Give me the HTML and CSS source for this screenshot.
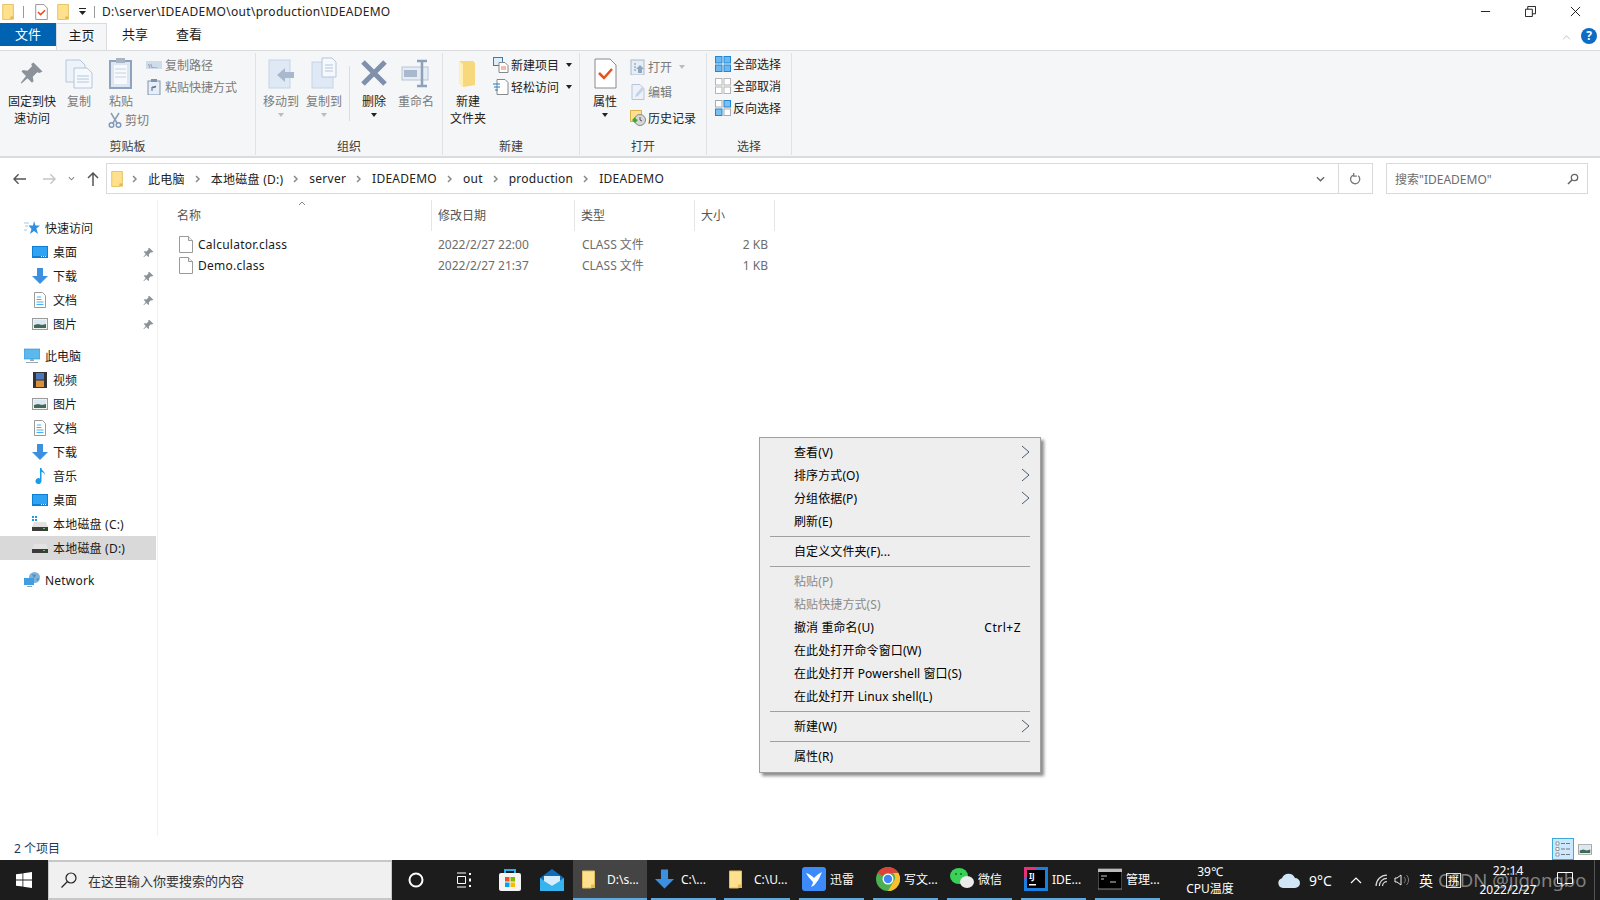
FILE: index.html
```html
<!DOCTYPE html>
<html lang="zh-CN">
<head>
  <meta charset="UTF-8" />
  <title>IDEADEMO</title>
  <link rel="stylesheet" href="styles.css">
</head>
<body>
  <!-- shared icons -->
  <svg class="defs" width="0" height="0">
    <symbol id="folder" viewBox="0 0 14 18">
      <path d="M.5.5h12v14h-3v3H.5z" fill="#ffe08c" stroke="#e3bc5c"/>
      <path d="M9.500 17.500v-3h3.500v3z" fill="#e8b84a"/>
    </symbol>
    <symbol id="checkdoc" viewBox="0 0 14 18">
      <path d="M.5.5h9l4 4v13H.5z" fill="#fff" stroke="#8a8a8a"/>
      <path d="M3 9l3 3 5-5" fill="none" stroke="#e8501e" stroke-width="1.800"/>
    </symbol>
    <symbol id="pin" viewBox="0 0 16 16">
      <path d="M9 1l6 6-2 1-1.500-.5-3 3 .5 3-1 1-3-3L1 15l-.500-.5L4 10 1 7l1-1 3 .5 3-3L7.500 2z" fill="#8b929a"/>
    </symbol>
    <symbol id="desktop" viewBox="0 0 16 12">
      <rect width="16" height="12" fill="#0f7fd6"/>
      <rect x="1" y="1" width="14" height="9" fill="#2ea3f2"/>
      <path d="M9 10h1v1H9zm2 0h1v1h-1zm2 0h1v1h-1z" fill="#fff"/>
    </symbol>
    <symbol id="down" viewBox="0 0 16 16">
      <path d="M5 0h6v8h5l-8 8-8-8h5z" fill="#3d8fdf"/>
    </symbol>
    <symbol id="textdoc" viewBox="0 0 12 16">
      <path d="M.5.500h8l3 3v12H.5z" fill="#fff" stroke="#9a9a9a"/>
      <path d="M3 5h4M2.500 7.500h5M2.500 10h7M2.500 12.500h7" stroke="#4ab0f0"/>
    </symbol>
    <symbol id="picture" viewBox="0 0 16 12">
      <rect x=".5" y=".5" width="15" height="11" fill="#f2f2f2" stroke="#9a9a9a"/>
      <rect x="2" y="2" width="12" height="8" fill="#dbe8f2"/>
      <path d="M2 7l4-1 4 1 4-1v4H2z" fill="#3f6a55"/>
    </symbol>
    <symbol id="drive" viewBox="0 0 16 12">
      <path d="M2 2h12l2 5H0z" fill="#e2e2e2"/>
      <rect y="7" width="16" height="4" fill="#3c3c3c"/>
      <rect x="11" y="8" width="2" height="1" fill="#4fd04f"/>
    </symbol>
    <symbol id="chev" viewBox="0 0 6 8">
      <path d="M1 1l3 3-3 3" fill="none" stroke="#8a8a8a" stroke-width="1.500"/>
    </symbol>
    <symbol id="menuarrow" viewBox="0 0 9 14">
      <path d="M1 1l7 6-7 6" fill="none" stroke="#4a5a6a"/>
    </symbol>
    <symbol id="blankfile" viewBox="0 0 14 17">
      <path d="M.5.500h9l4 4v12H.5z" fill="#fff" stroke="#9a9a9a"/>
      <path d="M9.500.500v4h4" fill="#eee" stroke="#9a9a9a"/>
    </symbol>
    <symbol id="tick4" viewBox="0 0 16 16">
      <rect x=".5" y=".5" width="6.500" height="6.500"/>
      <rect x="9" y=".5" width="6.500" height="6.500"/>
      <rect x=".5" y="9" width="6.500" height="6.500"/>
      <rect x="9" y="9" width="6.500" height="6.500"/>
    </symbol>
  </svg>

  <div class="window">
    <!-- title bar -->
    <div class="titlebar">
      <svg class="tb-ico tb-first"><use href="#folder"/></svg>
      <span class="tb-sep"></span>
      <svg class="tb-ico tb-doc"><use href="#checkdoc"/></svg>
      <svg class="tb-ico tb-folder"><use href="#folder"/></svg>
      <svg class="tb-drop" viewBox="0 0 7 7"><path d="M0 0h7v1H0zM0 3h7L3.500 7z" fill="#222"/></svg>
      <span class="tb-sep tb-sep2"></span>
      <span class="tb-title">D:\server\IDEADEMO\out\production\IDEADEMO</span>
      <div class="winbtns">
        <svg viewBox="0 0 12 12"><path d="M1 6h10" stroke="#111"/></svg>
        <svg viewBox="0 0 12 12"><path d="M.5 3.500h7.500v8H.5zM3 3.500V.5h8.500v8H8" fill="none" stroke="#111"/></svg>
        <svg viewBox="0 0 12 12"><path d="M1 1l10 10M11 1L1 11" stroke="#111"/></svg>
      </div>
    </div>

    <!-- tabs -->
    <div class="tabs">
      <div class="tab tab-file">文件</div>
      <div class="tab tab-on">主页</div>
      <div class="tab tab-share">共享</div>
      <div class="tab tab-view">查看</div>
      <svg class="tab-up" viewBox="0 0 10 6"><path d="M1 5l4-4 4 4" fill="none" stroke="#b5b5b5"/></svg>
      <div class="help">?</div>
    </div>

    <!-- ribbon -->
    <div class="ribbon">
      <div class="group g-clip">
        <div class="group-body">
          <div class="big w-pin">
            <svg class="big-ico" viewBox="0 0 32 32"><use href="#pin" x="4" y="4" width="24" height="24"/></svg>
            <span>固定到快<br>速访问</span>
          </div>
          <div class="big w-copy off">
            <svg class="big-ico" viewBox="0 0 32 32"><path d="M3 3h14l5 5v17H3z" fill="#eef3fa" stroke="#b6c6dc"/><path d="M11 11h13l5 5v15H11z" fill="#f5f8fc" stroke="#b6c6dc"/><path d="M14 19h12M14 22h12M14 25h12" stroke="#b6c6dc"/></svg>
            <span>复制</span>
          </div>
          <div class="paste-col">
            <div class="big off">
              <svg class="big-ico" viewBox="0 0 32 32"><rect x="5" y="4" width="21" height="27" fill="#dde6f2" stroke="#8fa3bd" stroke-width="2"/><rect x="9" y="8" width="13" height="19" fill="#f7f9fc"/><rect x="11" y="1" width="9" height="5" fill="#a9b5c5"/><path d="M10 12h11M10 16h11M10 20h11" stroke="#c5d2e2"/></svg>
              <span>粘贴</span>
            </div>
            <div class="small off cut">
              <svg class="sm-ico" viewBox="0 0 14 16"><path d="M3 1l6 10M11 1L5 11" stroke="#8d9db3" stroke-width="1.500"/><circle cx="3.500" cy="13" r="2.300" fill="none" stroke="#7f97ba" stroke-width="1.400"/><circle cx="10.500" cy="13" r="2.300" fill="none" stroke="#7f97ba" stroke-width="1.400"/></svg>
              <span>剪切</span>
            </div>
          </div>
          <div class="small-col s-clip">
            <div class="small off"><svg class="sm-ico" viewBox="0 0 16 16"><rect y="4" width="16" height="8" fill="#cfdcec"/><text class="ico-txt" x="2" y="10.500">\\...</text></svg><span>复制路径</span></div>
            <div class="small off"><svg class="sm-ico" viewBox="0 0 16 16"><rect x="2" y="2" width="12" height="14" fill="#e7eef7" stroke="#8093ad"/><rect x="5" y="0" width="6" height="3" fill="#8093ad"/><path d="M6 12V8h4M7 9l3-2" stroke="#48607f" fill="none"/></svg><span>粘贴快捷方式</span></div>
          </div>
        </div>
        <div class="group-label">剪贴板</div>
      </div>

      <div class="group g-org">
        <div class="group-body">
          <div class="big w-move off">
            <svg class="big-ico" viewBox="0 0 32 32"><rect x="4" y="3" width="21" height="28" fill="#dfe8f5" stroke="#c5d3e6"/><path d="M12 18l8-7v4h9v6h-9v4z" fill="#a9b9cd"/></svg>
            <span>移动到</span><i class="caret off-caret"></i>
          </div>
          <div class="big w-move2 off">
            <svg class="big-ico" viewBox="0 0 32 32"><rect x="4" y="5" width="21" height="26" fill="#dfe8f5" stroke="#c5d3e6"/><path d="M14 1h10l4 4v15H14z" fill="#f5f8fc" stroke="#b6c6dc"/><path d="M17 8h8M17 11h8M17 14h8" stroke="#b6c6dc"/></svg>
            <span>复制到</span><i class="caret off-caret"></i>
          </div>
          <span class="inner-sep"></span>
          <div class="big w-del">
            <svg class="big-ico" viewBox="0 0 32 32"><path d="M5 5l22 22M27 5L5 27" stroke="#7e90ab" stroke-width="5"/></svg>
            <span>删除</span><i class="caret"></i>
          </div>
          <div class="big w-ren off">
            <svg class="big-ico" viewBox="0 0 32 32"><rect x="2" y="10" width="26" height="13" fill="#e5ecf5" stroke="#b7c4d6"/><rect x="4" y="13" width="13" height="7" fill="#a9b9cd"/><path d="M17 4h10M22 4v25M17 29h10" stroke="#8ea1ba" stroke-width="2.500" fill="none"/></svg>
            <span>重命名</span>
          </div>
        </div>
        <div class="group-label">组织</div>
      </div>

      <div class="group g-new">
        <div class="group-body">
          <div class="big w-newf">
            <svg class="big-ico" viewBox="0 0 32 32"><path d="M7 4h14l2 2v22l-12 2-4-4z" fill="#f7d87c"/><path d="M7 4l4 3v23l-4-4z" fill="#fff0b8"/></svg>
            <span>新建<br>文件夹</span>
          </div>
          <div class="small-col s-new">
            <div class="small">
              <svg class="sm-ico" viewBox="0 0 16 16"><rect x=".5" y=".5" width="9" height="8" fill="#dfeefb" stroke="#2c7fc1"/><path d="M6 5.500h6l3 3v7H6z" fill="#fff" stroke="#888"/><path d="M8 10h5M8 12h5" stroke="#e87a50"/></svg>
              <span>新建项目</span><i class="caret inline"></i>
            </div>
            <div class="small">
              <svg class="sm-ico" viewBox="0 0 16 16"><path d="M4 .5h8l3 3v12H4z" fill="#fff" stroke="#888"/><path d="M0 5h7M1 8h6M2 11h3" stroke="#1d78c4"/></svg>
              <span>轻松访问</span><i class="caret inline"></i>
            </div>
          </div>
        </div>
        <div class="group-label">新建</div>
      </div>

      <div class="group g-open">
        <div class="group-body">
          <div class="big w-prop">
            <svg class="big-ico" viewBox="0 0 32 32"><path d="M6 2h15l6 6v23H6z" fill="#fff" stroke="#8a8a8a"/><path d="M10 16l5 5 8-9" fill="none" stroke="#e8501e" stroke-width="2.500"/></svg>
            <span>属性</span><i class="caret"></i>
          </div>
          <div class="small-col s-open">
            <div class="small off">
              <svg class="sm-ico" viewBox="0 0 16 16"><rect x="1" y="1" width="13" height="15" fill="#e7edf5" stroke="#aab8ca"/><path d="M4 5h2M4 8h2M4 11h2" stroke="#7b8ea8"/><path d="M8 14v-4H6l4-4 4 4h-2v4z" fill="#8fa6c3"/></svg>
              <span>打开</span><i class="caret inline off-caret"></i>
            </div>
            <div class="small off">
              <svg class="sm-ico" viewBox="0 0 16 16"><path d="M2 .5h8l4 4v11H2z" fill="#edf2f8" stroke="#b6c6dc"/><path d="M5 13l1-3 6-7 2 2-6 7z" fill="#c5d3e6"/></svg>
              <span>编辑</span>
            </div>
            <div class="small">
              <svg class="sm-ico" viewBox="0 0 16 16"><path d="M.5.5h11v11H.5z" fill="#ffe08c" stroke="#d8b24f"/><circle cx="10" cy="10" r="5.500" fill="#d7d7d7" stroke="#888"/><path d="M10 7v3l2 1" stroke="#555" fill="none"/><path d="M2 10l3-3 1 2 2 1-3 3z" fill="#3aa935"/></svg>
              <span>历史记录</span>
            </div>
          </div>
        </div>
        <div class="group-label">打开</div>
      </div>

      <div class="group g-sel">
        <div class="group-body">
          <div class="small-col s-sel">
            <div class="small">
              <svg class="sm-ico sel-all"><use href="#tick4"/></svg>
              <span>全部选择</span>
            </div>
            <div class="small">
              <svg class="sm-ico sel-none"><use href="#tick4"/></svg>
              <span>全部取消</span>
            </div>
            <div class="small">
              <svg class="sm-ico" viewBox="0 0 16 16"><rect x=".5" y=".5" width="6.500" height="6.500" fill="#fff" stroke="#aaa"/><rect x="9" y=".5" width="6.500" height="6.500" fill="#7dc0f0" stroke="#1f87d8"/><rect x=".5" y="9" width="6.500" height="6.500" fill="#7dc0f0" stroke="#1f87d8"/><rect x="9" y="9" width="6.500" height="6.500" fill="#fff" stroke="#aaa"/></svg>
              <span>反向选择</span>
            </div>
          </div>
        </div>
        <div class="group-label">选择</div>
      </div>
    </div>

    <!-- address row -->
    <div class="navrow">
      <div class="navbtns">
        <svg viewBox="0 0 14 12"><path d="M6 1L1 6l5 5M1 6h13" fill="none" stroke="#555" stroke-width="1.500"/></svg>
        <svg class="nav-off" viewBox="0 0 14 12"><path d="M8 1l5 5-5 5M13 6H0" fill="none" stroke="#c5c5c5" stroke-width="1.500"/></svg>
        <svg class="nav-small" viewBox="0 0 8 5"><path d="M1 1l3 3 3-3" fill="none" stroke="#888" stroke-width="1.200"/></svg>
        <svg class="nav-up" viewBox="0 0 12 14"><path d="M1 6l5-5 5 5M6 1v13" fill="none" stroke="#555" stroke-width="1.500"/></svg>
      </div>
      <div class="address">
        <svg class="addr-folder"><use href="#folder"/></svg>
        <div class="crumbs">
          <svg class="chev"><use href="#chev"/></svg><span>此电脑</span>
          <svg class="chev"><use href="#chev"/></svg><span>本地磁盘 (D:)</span>
          <svg class="chev"><use href="#chev"/></svg><span>server</span>
          <svg class="chev"><use href="#chev"/></svg><span>IDEADEMO</span>
          <svg class="chev"><use href="#chev"/></svg><span>out</span>
          <svg class="chev"><use href="#chev"/></svg><span>production</span>
          <svg class="chev"><use href="#chev"/></svg><span>IDEADEMO</span>
        </div>
        <svg class="addr-drop" viewBox="0 0 10 6"><path d="M1 1l4 4 4-4" fill="none" stroke="#666" stroke-width="1.500"/></svg>
        <div class="refresh">
          <svg viewBox="0 0 12 14"><path d="M4 3a5 5 0 1 0 5 1M4 1v3.500h3.500" fill="none" stroke="#777" stroke-width="1.400"/></svg>
        </div>
      </div>
      <div class="searchbox">
        <span>搜索"IDEADEMO"</span>
        <svg viewBox="0 0 12 12"><circle cx="7.500" cy="4.500" r="3.200" fill="none" stroke="#666" stroke-width="1.300"/><path d="M5 7l-4 4" stroke="#666" stroke-width="1.600"/></svg>
      </div>
    </div>

    <!-- body -->
    <div class="content">
      <nav class="sidebar">
        <div class="nav-row top">
          <svg class="nav-ico" viewBox="0 0 16 16"><path d="M10 1l1.500 4.500H16l-3.600 3 1.600 5.500-4-3-4 3 1.500-5-3-3.500h4.500z" fill="#2f8fe0"/><path d="M0 3h5M1 6h3M0 10h3" stroke="#9ccbf0"/></svg>
          <span>快速访问</span>
        </div>
        <div class="nav-row"><svg class="nav-ico"><use href="#desktop"/></svg><span>桌面</span><svg class="nav-pin"><use href="#pin"/></svg></div>
        <div class="nav-row"><svg class="nav-ico"><use href="#down"/></svg><span>下载</span><svg class="nav-pin"><use href="#pin"/></svg></div>
        <div class="nav-row"><svg class="nav-ico"><use href="#textdoc"/></svg><span>文档</span><svg class="nav-pin"><use href="#pin"/></svg></div>
        <div class="nav-row"><svg class="nav-ico"><use href="#picture"/></svg><span>图片</span><svg class="nav-pin"><use href="#pin"/></svg></div>

        <div class="nav-row top gap">
          <svg class="nav-ico" viewBox="0 0 16 16"><rect y="1" width="16" height="10" fill="#5bb9ee" stroke="#2f8fc9" stroke-width=".6"/><path d="M6 11h4v2H6zM2 14h12v1H2z" fill="#9aa9b8"/></svg>
          <span>此电脑</span>
        </div>
        <div class="nav-row"><svg class="nav-ico" viewBox="0 0 14 16"><rect width="14" height="16" fill="#333"/><rect x="3" y="1" width="8" height="6.500" fill="#4a78c0"/><rect x="3" y="8.500" width="8" height="6.500" fill="#d8913a"/></svg><span>视频</span></div>
        <div class="nav-row"><svg class="nav-ico"><use href="#picture"/></svg><span>图片</span></div>
        <div class="nav-row"><svg class="nav-ico"><use href="#textdoc"/></svg><span>文档</span></div>
        <div class="nav-row"><svg class="nav-ico"><use href="#down"/></svg><span>下载</span></div>
        <div class="nav-row"><svg class="nav-ico" viewBox="0 0 12 16"><path d="M6 0h1.500c0 3 3.500 3 3.500 7-1-2-2-3-3.500-3v9a3 3 0 1 1-1.500-2.500z" fill="#1e9be8"/></svg><span>音乐</span></div>
        <div class="nav-row"><svg class="nav-ico"><use href="#desktop"/></svg><span>桌面</span></div>
        <div class="nav-row"><svg class="nav-ico" viewBox="0 0 16 16"><path d="M0 0h2v2H0zm3 0h2v2H3zM0 3h2v2H0zm3 0h2v2H3z" fill="#1e9be8"/><use href="#drive" y="4" width="16" height="12"/></svg><span class="lat">本地磁盘 (C:)</span></div>
        <div class="nav-row selected"><svg class="nav-ico"><use href="#drive"/></svg><span class="lat">本地磁盘 (D:)</span></div>

        <div class="nav-row top gap">
          <svg class="nav-ico" viewBox="0 0 16 16"><circle cx="10.500" cy="5.500" r="5.500" fill="#7fb2d8"/><path d="M8 2l4 1-2 3zM12 7l3-1-1 3z" fill="#4d8ab8"/><rect y="6" width="10" height="7" fill="#3f9de0"/><path d="M3 14h5v1H3z" fill="#8aa"/></svg>
          <span class="lat">Network</span>
        </div>
      </nav>

      <main class="files">
        <svg class="sort" viewBox="0 0 8 5"><path d="M1 4l3-3 3 3" fill="none" stroke="#888"/></svg>
        <div class="file-head">
          <div class="h-name">名称</div>
          <div class="h-date">修改日期</div>
          <div class="h-type">类型</div>
          <div class="h-size">大小</div>
        </div>
        <div class="file-row">
          <div class="c-name"><svg><use href="#blankfile"/></svg><span>Calculator.class</span></div>
          <div class="c-date">2022/2/27 22:00</div>
          <div class="c-type">CLASS 文件</div>
          <div class="c-size">2 KB</div>
        </div>
        <div class="file-row">
          <div class="c-name"><svg><use href="#blankfile"/></svg><span>Demo.class</span></div>
          <div class="c-date">2022/2/27 21:37</div>
          <div class="c-type">CLASS 文件</div>
          <div class="c-size">1 KB</div>
        </div>
      </main>
    </div>

    <!-- status bar -->
    <div class="statusbar">
      <span class="st-count">2 个项目</span>
      <div class="viewbtns">
        <div class="vb-on">
          <svg viewBox="0 0 16 16"><path d="M1 1h3v3H1zM1 6.500h3v3H1zM1 12h3v3H1z" fill="#fff" stroke="#777" stroke-width=".7"/><path d="M6 2.500h4M11 2.500h4M6 8h4M11 8h4M6 13.500h4M11 13.500h4" stroke="#777"/></svg>
        </div>
        <div class="vb-off"><svg><use href="#picture"/></svg></div>
      </div>
    </div>

    <!-- taskbar -->
    <div class="taskbar">
      <div class="start">
        <svg viewBox="0 0 16 16"><path d="M0 2.300l6.500-.9v6.200H0zM7.300 1.300L16 0v7.600H7.300zM0 8.400h6.500v6.200L0 13.700zM7.300 8.400H16V16l-8.700-1.300z" fill="#fff"/></svg>
      </div>
      <div class="tsearch">
        <svg viewBox="0 0 16 16"><circle cx="10" cy="6" r="5" fill="none" stroke="#222" stroke-width="1.200"/><path d="M6.500 9.500L.5 15.500" stroke="#222" stroke-width="1.200"/></svg>
        <span>在这里输入你要搜索的内容</span>
      </div>
      <div class="tslot s48"><svg class="cortana" viewBox="0 0 16 16"><circle cx="8" cy="8" r="6.500" fill="none" stroke="#fff" stroke-width="2"/></svg></div>
      <div class="tslot s47"><svg class="tview" viewBox="0 0 16 16"><path d="M1 1h9M1 15h9M1.500 4.500h8v7h-8z" fill="none" stroke="#fff"/><path d="M13 1h2v2h-2zM13 6.500h2v3h-2zM13 13h2v2h-2z" fill="#fff"/></svg></div>
      <div class="tslot s46">
        <svg class="tstore" viewBox="0 0 24 24"><path d="M7 6V2h10v4" fill="none" stroke="#2bb0ee" stroke-width="2"/><rect x="1" y="5" width="22" height="18" rx="2" fill="#f4f4f4"/><rect x="7" y="9" width="4.500" height="4.500" fill="#f25022"/><rect x="12.500" y="9" width="4.500" height="4.500" fill="#7fba00"/><rect x="7" y="14.500" width="4.500" height="4.500" fill="#00a4ef"/><rect x="12.500" y="14.500" width="4.500" height="4.500" fill="#ffb900"/></svg>
      </div>
      <div class="tslot s40">
        <svg class="tmail" viewBox="0 0 24 22"><path d="M0 9l12-9 12 9v13H0z" fill="#0f6cbd"/><path d="M0 9l12 8 12-8v13H0z" fill="#35b4f0"/><path d="M4 7h16v5l-8 5-8-5z" fill="#d6eefb"/></svg>
      </div>

      <div class="task task-on w74">
        <svg class="t-ico t-f"><use href="#folder"/></svg>
        <span class="t-lab lab-d">D:\s...</span>
      </div>
      <div class="task w65 ml4">
        <svg class="t-ico t-dl"><use href="#down"/></svg>
        <span class="t-lab">C:\...</span>
      </div>
      <div class="task w66 ml8">
        <svg class="t-ico t-f t-f2"><use href="#folder"/></svg>
        <span class="t-lab lab-u">C:\U...</span>
      </div>
      <div class="task w65 ml9">
        <svg class="t-ico t-app" viewBox="0 0 24 24"><rect width="24" height="24" rx="3" fill="#3d8bfb"/><path d="M4 6c4 1 6 3 8 5 2-2 4-4 8-6-2 4-3 8-6 11-1 2-3 3-5 4 1-2 2-4 2-5-2-2-5-5-7-9z" fill="#fff"/></svg>
        <span class="t-lab">迅雷</span>
      </div>
      <div class="task w65 ml9">
        <svg class="t-ico t-app" viewBox="0 0 24 24"><circle cx="12" cy="12" r="12" fill="#4caf50"/><path d="M12 0a12 12 0 0 1 10.400 6H12a6 6 0 0 0-5.200 3L1.600 6A12 12 0 0 1 12 0z" fill="#db4437"/><path d="M22.400 6A12 12 0 0 1 12 24l5.200-9A6 6 0 0 0 17 6z" fill="#fbc02d"/><circle cx="12" cy="12" r="5.500" fill="#fff"/><circle cx="12" cy="12" r="4.200" fill="#4285f4"/></svg>
        <span class="t-lab">写文...</span>
      </div>
      <div class="task w65 ml9">
        <svg class="t-ico t-app" viewBox="0 0 24 24"><ellipse cx="9" cy="9" rx="9" ry="8" fill="#3ad158"/><ellipse cx="17" cy="15" rx="7" ry="6" fill="#ececec"/><circle cx="6" cy="7" r="1" fill="#1a6a2a"/><circle cx="11" cy="7" r="1" fill="#1a6a2a"/></svg>
        <span class="t-lab">微信</span>
      </div>
      <div class="task w65 ml9">
        <svg class="t-ico t-app" viewBox="0 0 24 24"><rect width="24" height="24" fill="#1b7fe0"/><path d="M0 0h14L0 12z" fill="#e8317a"/><rect x="3" y="3" width="18" height="18" fill="#000"/><rect x="5" y="17" width="7" height="1.500" fill="#fff"/><text class="ico-ij" x="5" y="12">IJ</text></svg>
        <span class="t-lab">IDE...</span>
      </div>
      <div class="task w65 ml9">
        <svg class="t-ico t-app" viewBox="0 0 24 20"><rect width="24" height="20" fill="#000" stroke="#888"/><rect width="24" height="3" fill="#bbb"/><path d="M3 7h6M3 10h3M12 13h6" stroke="#ccc"/></svg>
        <span class="t-lab">管理...</span>
      </div>

      <div class="cpu">39℃<br>CPU温度</div>
      <svg class="cloud" viewBox="0 0 22 16"><path d="M5 16a5 5 0 0 1-1-9.800A7 7 0 0 1 17 6a5 5 0 0 1 0 10z" fill="#cfe6f7"/></svg>
      <span class="temp">9°C</span>
      <svg class="tray tray-up" viewBox="0 0 12 7"><path d="M1 6l5-5 5 5" fill="none" stroke="#fff" stroke-width="1.200"/></svg>
      <svg class="tray tray-wifi" viewBox="0 0 12 12"><path d="M1 11A10 10 0 0 1 11 1M4 11A7 7 0 0 1 11 4M7 11a4 4 0 0 1 4-4" fill="none" stroke="#ddd" stroke-width="1.100"/></svg>
      <svg class="tray tray-vol" viewBox="0 0 16 14"><path d="M1 5h2l4-3v10l-4-3H1z" fill="none" stroke="#eee"/><path d="M10 4a4 4 0 0 1 0 6M12.500 2a7 7 0 0 1 0 10" fill="none" stroke="#777"/></svg>
      <span class="ime">英</span>
      <span class="pinyin">拼</span>
      <div class="clock">22:14<br>2022/2/27</div>
      <svg class="notif" viewBox="0 0 16 16"><path d="M.5.5h15v11H8l-3 3v-3H.5z" fill="none" stroke="#fff"/></svg>
      <span class="showdesk"></span>
    </div>
  </div>

  <!-- right-click menu -->
  <div class="ctxmenu">
    <div class="mi">查看(V)<svg><use href="#menuarrow"/></svg></div>
    <div class="mi">排序方式(O)<svg><use href="#menuarrow"/></svg></div>
    <div class="mi">分组依据(P)<svg><use href="#menuarrow"/></svg></div>
    <div class="mi">刷新(E)</div>
    <div class="msep"></div>
    <div class="mi">自定义文件夹(F)...</div>
    <div class="msep"></div>
    <div class="mi dis">粘贴(P)</div>
    <div class="mi dis">粘贴快捷方式(S)</div>
    <div class="mi">撤消 重命名(U)<span class="kbd">Ctrl+Z</span></div>
    <div class="mi">在此处打开命令窗口(W)</div>
    <div class="mi">在此处打开 Powershell 窗口(S)</div>
    <div class="mi">在此处打开 Linux shell(L)</div>
    <div class="msep"></div>
    <div class="mi">新建(W)<svg><use href="#menuarrow"/></svg></div>
    <div class="msep"></div>
    <div class="mi">属性(R)</div>
  </div>

  <!-- watermark -->
  <div class="watermark">CSDN @jigongbo</div>
</body>
</html>
```

FILE: styles.css
```css
html, body {
  margin: 0;
  padding: 0;
}
body {
  width: 1600px;
  height: 900px;
  overflow: hidden;
  position: relative;
  background: #fff;
  color: #1a1a1a;
  font-family: "Noto Sans", "Noto Sans CJK SC", sans-serif;
  font-size: 12px;
}
svg {
  display: block;
  flex: none;
}
.defs {
  position: absolute;
}
.window {
  display: flex;
  flex-direction: column;
  height: 900px;
}
.lat {
  letter-spacing: 0.2px;
}

/* title bar */
.titlebar {
  height: 23px;
  display: flex;
  align-items: center;
}
.tb-ico {
  width: 13px;
  height: 16px;
}
.tb-first {
  margin-left: 2px;
}
.tb-sep {
  width: 1px;
  height: 12px;
  background: #9a9a9a;
  margin-left: 8px;
}
.tb-doc {
  margin-left: 11px;
}
.tb-folder {
  margin-left: 9px;
}
.tb-drop {
  width: 7px;
  height: 7px;
  margin-left: 9px;
}
.tb-sep2 {
  margin-left: 8px;
}
.tb-title {
  margin-left: 7px;
  color: #222;
  letter-spacing: 0.29px;
}
.winbtns {
  margin-left: auto;
  display: flex;
  gap: 34px;
  padding-right: 19px;
}
.winbtns svg {
  width: 11px;
  height: 11px;
}

/* tabs */
.tabs {
  height: 27px;
  display: flex;
  align-items: flex-start;
}
.tab {
  height: 23px;
  line-height: 23px;
  text-align: center;
  font-size: 13px;
}
.tab-file {
  width: 56px;
  background: #0063b1;
  color: #fff;
}
.tab-on {
  width: 51px;
  height: 27px;
  background: #f5f6f7;
  border: 1px solid #dadbdc;
  border-bottom: none;
  box-sizing: border-box;
  line-height: 23px;
}
.tab-share {
  width: 56px;
}
.tab-view {
  width: 52px;
}
.tab-up {
  width: 9px;
  height: 5px;
  margin: 12px 0 0 auto;
}
.help {
  width: 16px;
  height: 16px;
  margin: 5px 3px 0 10px;
  border-radius: 50%;
  background: #0f6cc4;
  color: #fff;
  font-weight: 700;
  font-size: 12px;
  line-height: 16px;
  text-align: center;
}

/* ribbon */
.ribbon {
  height: 108px;
  box-sizing: border-box;
  display: flex;
  background: #f5f6f7;
  border-top: 1px solid #dadbdc;
  border-bottom: 2px solid #dadbdc;
}
.group {
  height: 102px;
  margin-top: 2px;
  box-sizing: border-box;
  border-right: 1px solid #e1e2e3;
  display: flex;
  flex-direction: column;
}
.group-body {
  height: 83px;
  display: flex;
}
.group-label {
  text-align: center;
  color: #3d3d3d;
  line-height: 17px;
  margin-top: 2px;
}
.g-clip { width: 256px; }
.g-org { width: 187px; }
.g-new { width: 137px; }
.g-open { width: 127px; }
.g-sel { width: 85px; }

.big {
  display: flex;
  flex-direction: column;
  align-items: center;
  text-align: center;
  line-height: 17px;
  position: relative;
  color: #222;
}
.big-ico {
  width: 32px;
  height: 32px;
  margin: 4px 0 4px;
}
.off {
  color: #7a7a7a;
}
.caret {
  width: 0;
  height: 0;
  border: 3px solid transparent;
  border-top: 4px solid #222;
  border-bottom: none;
  margin-top: 3px;
}
.caret.inline {
  margin: 0 0 0 5px;
}
.off-caret {
  border-top-color: #bcbcbc;
}
.w-pin { width: 64px; }
.w-copy { width: 30px; }
.paste-col { width: 44px; margin-left: 8px; }
.paste-col .big { width: 38px; }
.cut {
  margin-left: 5px;
  margin-top: -1px;
  height: 22px;
}
.w-move { width: 48px; margin-left: 1px; }
.w-move2 { width: 36px; margin-left: 1px; }
.inner-sep {
  width: 1px;
  height: 55px;
  margin: 13px 8px 0 7px;
  background: #dcdcdc;
}
.w-del { width: 32px; }
.w-ren { width: 48px; margin-left: 2px; }
.w-newf { width: 50px; }
.w-prop { width: 50px; }

.small-col {
  display: flex;
  flex-direction: column;
}
.small {
  display: flex;
  align-items: center;
  height: 22px;
  gap: 2px;
  color: #222;
  white-space: nowrap;
}
.small.off {
  color: #7a7a7a;
}
.sm-ico {
  width: 16px;
  height: 16px;
}
.s-clip { padding-top: 1px; }
.s-clip .small { gap: 3px; }
.s-new { padding-top: 1px; }
.s-open { padding-top: 1px; }
.s-open .small { height: 25.5px; }
.s-sel { padding-left: 8px; }
.ico-txt {
  font-size: 6px;
  fill: #4f6480;
}
.sel-all {
  fill: #6fb7ec;
  stroke: #1f87d8;
}
.sel-none {
  fill: #fff;
  stroke: #b5b5b5;
}

/* address row */
.navrow {
  height: 42px;
  display: flex;
  align-items: flex-start;
  padding-top: 5px;
  box-sizing: border-box;
}
.navbtns {
  width: 106px;
  height: 31px;
  display: flex;
  align-items: center;
  padding-left: 13px;
  box-sizing: border-box;
}
.navbtns svg {
  width: 13px;
  height: 12px;
}
.navbtns .nav-off {
  margin-left: 17px;
}
.navbtns .nav-small {
  width: 7px;
  height: 5px;
  margin-left: 12px;
}
.navbtns .nav-up {
  width: 12px;
  height: 14px;
  margin-left: 12px;
}
.address {
  width: 1267px;
  height: 31px;
  box-sizing: border-box;
  border: 1px solid #d9d9d9;
  display: flex;
  align-items: center;
}
.addr-folder {
  width: 13px;
  height: 16px;
  margin-left: 4px;
}
.crumbs {
  display: flex;
  align-items: center;
  margin-left: 8px;
  color: #222;
}
.chev {
  width: 6px;
  height: 8px;
  margin-right: 10px;
}
.crumbs span {
  margin-right: 10px;
  letter-spacing: 0.25px;
}
.addr-drop {
  width: 9px;
  height: 6px;
  margin-left: auto;
  margin-right: 13px;
}
.refresh {
  width: 33px;
  height: 100%;
  border-left: 1px solid #d9d9d9;
  display: flex;
  align-items: center;
  justify-content: center;
}
.refresh svg {
  width: 11px;
  height: 13px;
}
.searchbox {
  width: 202px;
  height: 31px;
  box-sizing: border-box;
  margin-left: 13px;
  border: 1px solid #d9d9d9;
  display: flex;
  align-items: center;
  justify-content: space-between;
  padding: 0 8px;
  color: #6d6d6d;
}
.searchbox svg {
  width: 12px;
  height: 12px;
}

/* sidebar + file list */
.content {
  flex: 1;
  display: flex;
  min-height: 0;
}
.sidebar {
  width: 158px;
  box-sizing: border-box;
  border-right: 1px solid #f0f0f0;
  padding: 16px 1px 0 0;
  height: 636px;
}
.nav-row {
  height: 24px;
  display: flex;
  align-items: center;
  padding-left: 32px;
  position: relative;
  color: #1a1a1a;
}
.nav-ico {
  width: 16px;
  height: 16px;
  margin-right: 5px;
}
.nav-row.top {
  padding-left: 24px;
}
.nav-row.gap {
  margin-top: 8px;
}
.selected {
  background: #d9d9d9;
}
.nav-pin {
  width: 11px;
  height: 11px;
  margin-left: auto;
  margin-right: 2px;
}
.files {
  flex: 1;
  position: relative;
}
.sort {
  position: absolute;
  left: 140px;
  top: 1px;
  width: 8px;
  height: 5px;
}
.file-head,
.file-row {
  display: grid;
  grid-template-columns: 273px 143px 120px 80px;
  margin-left: 1px;
}
.file-head {
  height: 28px;
  color: #555;
  margin-bottom: 6px;
}
.file-head > div {
  line-height: 31px;
  padding-left: 6px;
  border-right: 1px solid #e5e5e5;
}
.file-head .h-name {
  padding-left: 18px;
}
.file-row {
  height: 21px;
  line-height: 21px;
  color: #6d6d6d;
}
.c-name {
  display: flex;
  align-items: center;
  color: #1a1a1a;
  padding-left: 20px;
  letter-spacing: 0.25px;
}
.c-name svg {
  width: 14px;
  height: 17px;
  margin-right: 5px;
}
.c-date {
  padding-left: 6px;
}
.c-type {
  padding-left: 7px;
}
.c-size {
  text-align: right;
  padding-right: 7px;
}

/* status bar */
.statusbar {
  height: 22px;
  display: flex;
  align-items: center;
  justify-content: space-between;
  color: #1a3a5c;
}
.st-count {
  margin-left: 14px;
  margin-top: -2px;
}
.viewbtns {
  display: flex;
  align-items: center;
  margin-right: 8px;
}
.vb-on {
  width: 22px;
  height: 22px;
  box-sizing: border-box;
  background: #cce8ff;
  border: 1px solid #3fa9dc;
  display: flex;
  align-items: center;
  justify-content: center;
}
.vb-on svg {
  width: 16px;
  height: 16px;
}
.vb-off {
  margin-left: 4px;
}
.vb-off svg {
  width: 14px;
  height: 11px;
}

/* taskbar */
.taskbar {
  height: 40px;
  background: #1c1c1c;
  color: #fff;
  display: flex;
  align-items: center;
  font-size: 12px;
}
.start {
  width: 48px;
  display: flex;
  justify-content: center;
}
.start svg {
  width: 16px;
  height: 16px;
}
.tsearch {
  width: 344px;
  height: 40px;
  box-sizing: border-box;
  background: #f0f0f0;
  border: 1px solid #c7c7c7;
  border-top-width: 2px;
  border-bottom-width: 2px;
  color: #333;
  display: flex;
  align-items: center;
  font-size: 13px;
}
.tsearch svg {
  width: 16px;
  height: 16px;
  margin: 0 11px 0 12px;
}
.tslot {
  display: flex;
  justify-content: center;
  align-items: center;
}
.s48 { width: 48px; }
.s47 { width: 47px; }
.s46 { width: 46px; }
.s40 { width: 40px; justify-content: flex-start; }
.cortana, .tview {
  width: 16px;
  height: 16px;
}
.tstore {
  width: 24px;
  height: 26px;
}
.tmail {
  width: 24px;
  height: 24px;
  margin-left: 7px;
}
.task {
  height: 40px;
  box-sizing: border-box;
  border-bottom: 2px solid #5fa9dd;
  display: flex;
  align-items: center;
}
.task-on {
  background: #444;
}
.w74 { width: 74px; }
.w65 { width: 65px; }
.w66 { width: 66px; }
.ml4 { margin-left: 4px; }
.ml8 { margin-left: 8px; }
.ml9 { margin-left: 9px; }
.t-ico {
  margin-left: 3px;
  margin-right: 4px;
}
.t-f {
  width: 14px;
  height: 21px;
  margin-left: 9px;
  margin-right: 11px;
}
.t-f2 {
  margin-left: 5px;
}
.t-dl {
  width: 19px;
  height: 20px;
  margin-left: 4px;
  margin-right: 7px;
}
.t-app {
  width: 24px;
  height: 24px;
}
.ico-ij {
  font-size: 8px;
  font-weight: 700;
  fill: #fff;
}
.cpu {
  width: 100px;
  text-align: center;
  line-height: 17px;
}
.cloud {
  width: 22px;
  height: 16px;
  margin-left: 18px;
}
.temp {
  margin-left: 9px;
  font-size: 14px;
  width: 23px;
}
.tray {
  flex: none;
}
.tray-up {
  width: 12px;
  height: 7px;
  margin-left: 18px;
}
.tray-wifi {
  width: 13px;
  height: 13px;
  margin-left: 13px;
}
.tray-vol {
  width: 16px;
  height: 14px;
  margin-left: 6px;
}
.ime {
  margin-left: 9px;
  font-size: 14px;
}
.pinyin {
  width: 15px;
  height: 15px;
  box-sizing: border-box;
  margin-left: 13px;
  border: 1px solid #ddd;
  font-size: 11px;
  line-height: 13px;
  text-align: center;
}
.clock {
  width: 60px;
  margin-left: 17px;
  text-align: center;
  line-height: 19px;
  font-size: 12px;
  white-space: nowrap;
}
.notif {
  width: 16px;
  height: 16px;
  margin-left: 19px;
}
.showdesk {
  width: 1px;
  height: 40px;
  margin-left: 21px;
  background: #555;
}

/* context menu */
.ctxmenu {
  position: absolute;
  left: 759px;
  top: 437px;
  width: 282px;
  height: 336px;
  box-sizing: border-box;
  padding: 3px 0;
  background: #eee;
  border: 1px solid #a0a0a0;
  box-shadow: 3px 3px 3px rgba(0, 0, 0, 0.45);
  color: #000;
  letter-spacing: 0.1px;
}
.mi {
  height: 23px;
  line-height: 23px;
  padding: 0 10px 0 34px;
  display: flex;
  justify-content: space-between;
  align-items: center;
}
.mi svg {
  width: 9px;
  height: 14px;
  margin-top: -2px;
}
.dis {
  color: #8a8a8a;
}
.msep {
  height: 1px;
  margin: 3px 10px;
  background: #a0a0a0;
}
.kbd {
  margin-right: 9px;
  letter-spacing: 0.5px;
}

/* watermark */
.watermark {
  position: absolute;
  left: 1438px;
  top: 867px;
  font-size: 18.500px;
  line-height: 26px;
  color: rgba(255, 255, 255, 0.45);
  white-space: nowrap;
}
```
